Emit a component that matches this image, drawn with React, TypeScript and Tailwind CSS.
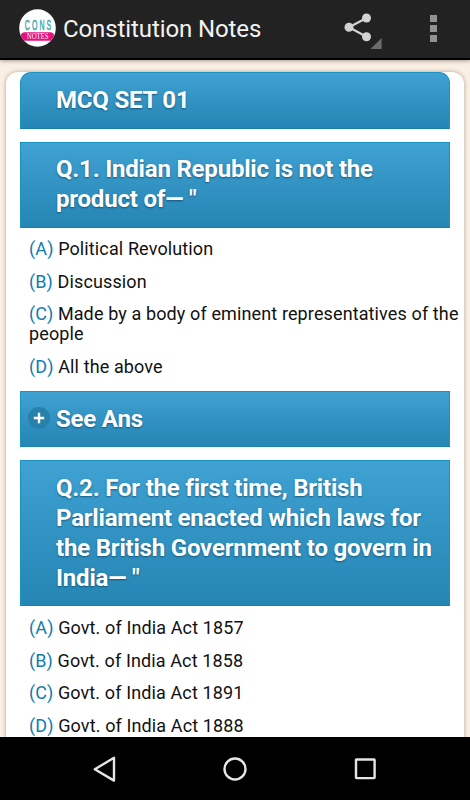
import React from "react";

interface Option {
  key: string;
  text: string;
}

interface BannerProps {
  lines: string[];
  className?: string;
  children?: React.ReactNode;
}

const firstOptions: Option[] = [
  { key: "(A)", text: "Political Revolution" },
  { key: "(B)", text: "Discussion" },
  { key: "(C)", text: "Made by a body of eminent representatives of the people" },
  { key: "(D)", text: "All the above" },
];

const secondOptions: Option[] = [
  { key: "(A)", text: "Govt. of India Act 1857" },
  { key: "(B)", text: "Govt. of India Act 1858" },
  { key: "(C)", text: "Govt. of India Act 1891" },
  { key: "(D)", text: "Govt. of India Act 1888" },
];

const Logo = () => (
  <svg viewBox="0 0 37 38" className="h-[38px] w-[37px] shrink-0 overflow-visible">
    <defs>
      <clipPath id="logo-clip">
        <ellipse cx="18.5" cy="19" rx="18.3" ry="18.7" />
      </clipPath>
    </defs>
    <g clipPath="url(#logo-clip)">
      <rect width="37" height="38" fill="#ffffff" />
      <rect x="1.5" y="23.2" width="34" height="8.6" rx="4.3" fill="#e6107e" />
    </g>
    <text
      transform="translate(5.8 20.8) scale(0.45 1)"
      fontFamily="Liberation Sans, sans-serif"
      fontSize="15.5"
      fill="#45aab3"
      stroke="#45aab3"
      strokeWidth="0.6"
      letterSpacing="4.6"
    >
      CONS
    </text>
    <text
      x="7.8"
      y="30.4"
      fontFamily="Liberation Serif, serif"
      fontSize="8.6"
      fill="#ffffff"
      textLength="21.6"
      lengthAdjust="spacingAndGlyphs"
    >
      NOTES
    </text>
  </svg>
);

const ShareIcon = () => (
  <svg viewBox="0 0 42 38" className="h-[38px] w-[42px]">
    <path d="M26.5 7 9 16.3l17.5 9.4" fill="none" stroke="#d2d2d2" strokeWidth="2.2" />
    <circle cx="26.5" cy="7" r="4.5" fill="#d2d2d2" />
    <circle cx="9" cy="16.3" r="4.5" fill="#d2d2d2" />
    <circle cx="26.5" cy="25.7" r="4.5" fill="#d2d2d2" />
    <path d="M41.6 27v11H30.5z" fill="#6b6b6b" />
  </svg>
);

const Banner = ({ lines, className = "", children }: BannerProps) => (
  <h2
    className={`relative mr-[14px] ml-[14px] border border-[#1a93c4] border-b-[#1681b0] bg-linear-to-b from-[#3fa2d3] to-[#2585b3] pl-[35px] text-[24px] leading-[29.8px] font-bold tracking-[-0.2px] whitespace-nowrap text-white [text-shadow:0_1px_2px_rgba(0,50,80,0.6)] ${className}`}
  >
    {children}
    {lines.map((line) => (
      <span key={line} className="block">
        {line}
      </span>
    ))}
  </h2>
);

const Options = ({ items }: { items: Option[] }) => (
  <div className="flex flex-col gap-[12.6px] pr-1 pl-[23px] text-[18px] leading-[20px] tracking-[0.12px] text-[#111111]">
    {items.map((item) => (
      <p key={item.key}>
        <span className="text-[#117cae]">{item.key}</span> {item.text}
      </p>
    ))}
  </div>
);

const App = () => (
  <div className="flex h-[800px] w-[470px] flex-col overflow-hidden bg-[#faefe3] font-[Roboto,sans-serif]">
    <header className="z-10 flex h-[60px] shrink-0 items-start border-b-2 border-black bg-[#222222] pl-[18.5px] shadow-[0_1px_4px_rgba(0,0,0,0.35)]">
      <div className="pt-[9px]">
        <Logo />
      </div>
      <h1 className="ml-[7.5px] pt-[14px] text-[24px] leading-[30px] tracking-[-0.1px] text-[#f2f2f2]">
        Constitution Notes
      </h1>
      <div className="ml-auto flex items-start">
        <div className="mr-[48px] pt-[11px]">
          <ShareIcon />
        </div>
        <div className="mt-[15px] mr-[33px] flex flex-col gap-[3px]">
          <span className="size-[7px] bg-[#929292]" />
          <span className="size-[7px] bg-[#929292]" />
          <span className="size-[7px] bg-[#929292]" />
        </div>
      </div>
    </header>

    <main className="min-h-0 flex-1 overflow-hidden pt-3">
      <div className="ml-[6px] h-[720px] w-[458px] rounded-xl bg-white shadow-[0_0_4px_rgba(80,50,20,0.4)]">
        <Banner lines={["MCQ SET 01"]} className="h-[56.5px] rounded-t-[11px] pt-[13px]" />
        <Banner
          lines={["Q.1. Indian Republic is not the", 'product of— "']}
          className="mt-[13px] mb-[11.5px] h-[86px] pt-[12.5px]"
        />
        <Options items={firstOptions} />
        <Banner lines={["See Ans"]} className="mt-[14px] h-[56px] pt-[13px]">
          <span className="absolute top-[15px] left-[7px] flex size-[22px] items-center justify-center rounded-full bg-[#2681ad]">
            <svg viewBox="0 0 12 12" className="size-3">
              <path d="M6 .8v10.4M.8 6h10.4" stroke="#ffffff" strokeWidth="2.4" />
            </svg>
          </span>
        </Banner>
        <Banner
          lines={[
            "Q.2. For the first time, British",
            "Parliament enacted which laws for",
            "the British Government to govern in",
            'India— "',
          ]}
          className="mt-[13.7px] mb-[11.5px] h-[146px] pt-[12.8px]"
        />
        <Options items={secondOptions} />
      </div>
    </main>

    <nav className="z-10 h-[63px] shrink-0 bg-black">
      <div className="flex h-full items-center justify-between px-[92px]">
        <svg viewBox="0 0 26 28" className="h-7 w-[26px]" fill="none" stroke="#e5e5e5" strokeWidth="2.4">
          <path d="M22 2.8v22.8L2.8 14.3z" strokeLinejoin="round" />
        </svg>
        <svg viewBox="0 0 26 26" className="size-[26px]" fill="none" stroke="#e5e5e5" strokeWidth="2.4">
          <circle cx="13" cy="13" r="10.5" />
        </svg>
        <svg viewBox="0 0 26 26" className="size-[26px]" fill="none" stroke="#e5e5e5" strokeWidth="2.4">
          <rect x="4" y="3.5" width="18.6" height="18.6" rx="0.5" />
        </svg>
      </div>
    </nav>
  </div>
);

export default App;
